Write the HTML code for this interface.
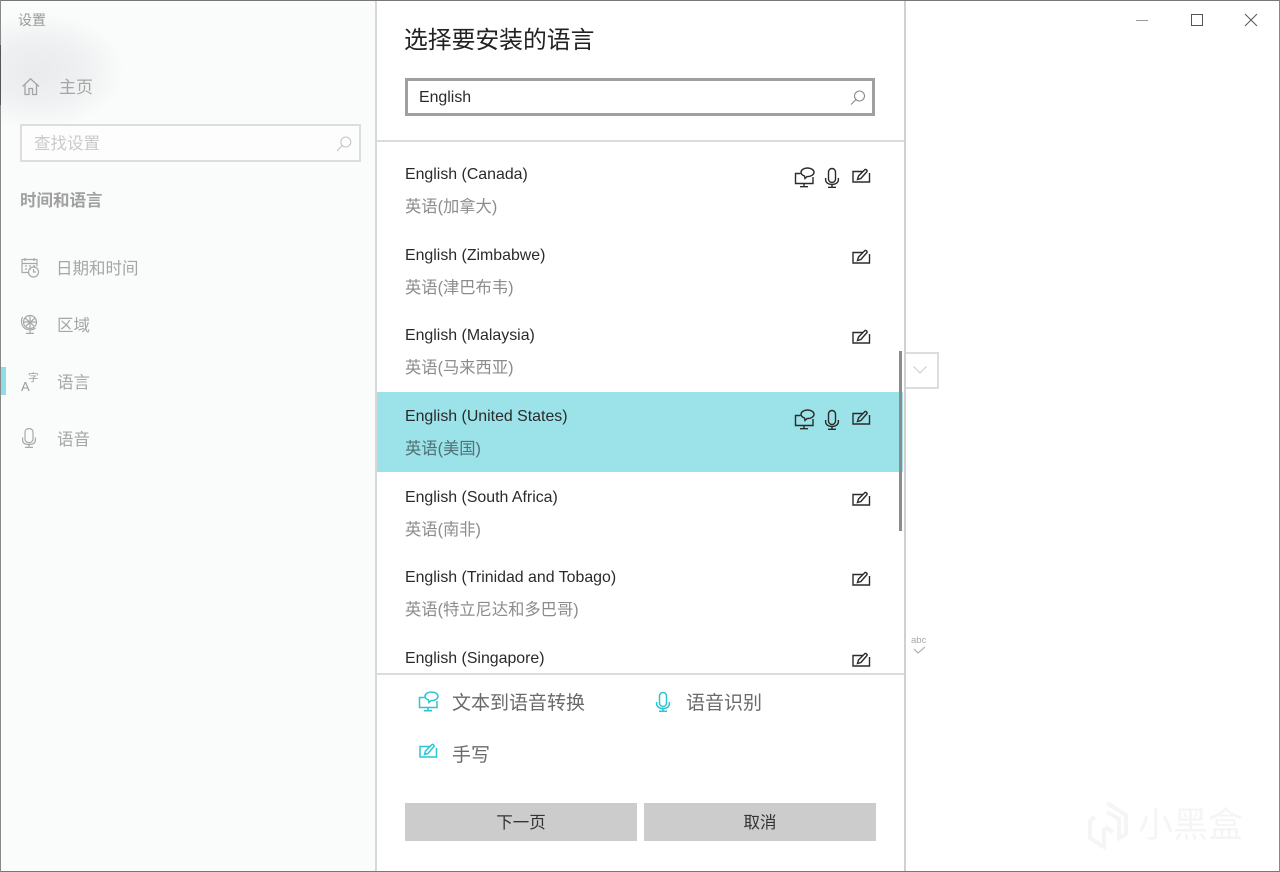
<!DOCTYPE html>
<html lang="zh"><head><meta charset="utf-8">
<style>
html,body{margin:0;padding:0;width:1280px;height:872px;overflow:hidden;background:#fff}
body{position:relative;font-family:"Liberation Sans","Noto Sans CJK SC",sans-serif}
.a{position:absolute;white-space:nowrap;line-height:1}
.side{position:absolute;left:1px;top:1px;width:374px;height:870px;background:radial-gradient(ellipse 85px 58px at 38px 70px,#e9ebec 0%,#eef0f1 50%,rgba(250,251,251,0) 100%),#fafbfb}
.s{color:#a6a6a6;font-size:16.5px}
.en{color:#2a2a2a;font-size:15.9px;left:405px}
.zh{color:#8c8c8c;font-size:16.3px;left:405px}
svg{position:absolute;overflow:visible;fill:none}
.ic{stroke:#2b2b2b;stroke-width:1.4}
.ct{stroke:#2cc5d3;stroke-width:1.5}
.g{stroke:#a8a8a8;stroke-width:1.2}
.btn{position:absolute;top:803px;height:38px;width:232px;background:#ccc;color:#333;font-size:16.5px;line-height:40px;text-align:center}
</style></head><body>
<svg width="0" height="0" style="position:absolute"><defs>
<g id="tts"><path d="M6.500 6.500H1.500V16.500H19V10M10 16.500v3M6 19.700h8"/><path d="M13.500 1c3.600 0 6.500 1.900 6.500 4.300S17.100 9.600 13.500 9.600H13L11 11.500 10.500 9C8.500 8.300 7 7 7 5.300 7 2.900 9.900 1 13.500 1z"/></g>
<g id="mic"><rect x="3.500" y="1.500" width="7" height="14" rx="3.500"/><path d="M.6 11v1.500C.6 15.800 3.500 17.500 7 17.500S13.400 15.800 13.400 12.500V11M7 17.500v2.500M3 20.300h8"/></g>
<g id="pen"><path d="M10.500 4.500H1v10.500h16.500V6"/><path d="M5.500 12.500l1-3.500L13 2.500c.7-.7 2.700 1.200 2 2L8.900 11.500z"/></g>
</defs></svg>

<div class="side"></div>
<div style="position:absolute;left:0;top:0;width:1280px;height:1px;background:#777"></div>
<div style="position:absolute;left:0;top:871px;width:1280px;height:1px;background:#777"></div>
<div style="position:absolute;left:0;top:0;width:1px;height:872px;background:#888"></div>
<div style="position:absolute;left:1279px;top:0;width:1px;height:872px;background:#888"></div>
<div style="position:absolute;left:0;top:45px;width:1px;height:60px;background:#555"></div>

<div class="a" style="left:18px;top:13px;font-size:14px;color:#9a9a9a">设置</div>
<svg style="left:22px;top:78px" width="18" height="18" stroke="#a4a4a4" stroke-width="1.300"><path d="M.6 8.500L8.500.8l8.500 7.700M3 6.500v10h4v-6h3.500v6h4v-10"/></svg>
<div class="a s" style="left:59px;top:79px;font-size:17px">主页</div>
<div style="position:absolute;left:20px;top:124px;width:337px;height:34px;border:2px solid #dcdede;background:#fdfdfd"></div>
<div class="a" style="left:34px;top:136px;font-size:16.500px;color:#cacaca">查找设置</div>
<svg style="left:336px;top:136px" width="16" height="16" stroke="#c4c4c4" stroke-width="1.100"><circle cx="9.800" cy="6" r="5"/><path d="M6.300 9.500L1 15"/></svg>
<div class="a" style="left:20px;top:193px;font-size:16.500px;font-weight:bold;color:#a0a0a0">时间和语言</div>

<svg class="g" style="left:21px;top:258px" width="20" height="20"><path d="M8 14.500H1V1.500h15v7M1 5.500h15M4 0v3M13 0v3M4 8h2M8 8h2M12 8h2M4 11h2M8 11h2"/><circle cx="12.500" cy="14" r="5"/><path d="M12.500 11v3h2.500"/></svg>
<div class="a s" style="left:56px;top:261px">日期和时间</div>
<svg class="g" style="left:20px;top:314px" width="20" height="21"><circle cx="10" cy="8" r="6.500"/><path d="M2.500 3C.5 7 1.500 12 5 14.500c3 2 7.500 2 10.500-.5M10 16.500V19M6 19.400h8M5 4l9 8M15 4l-9 8M10 1.500v13M3.500 8h13"/></svg>
<div class="a s" style="left:57px;top:318px">区域</div>
<div style="position:absolute;left:1px;top:367px;width:5px;height:28px;background:#8fdde4"></div>
<div class="a" style="left:21px;top:380px;font-size:13px;color:#9c9c9c">A</div>
<div class="a" style="left:28px;top:373px;font-size:10.500px;color:#9c9c9c">字</div>
<div class="a s" style="left:57px;top:375px">语言</div>
<svg class="g" style="left:22px;top:428px" width="14" height="20"><rect x="3" y=".6" width="8" height="14" rx="3.500"/><path d="M.6 9.500v2.500c0 3 2.500 4.500 6.400 4.500s6.400-1.500 6.400-4.500V9.500M7 16.500v2.500M3 19.400h8"/></svg>
<div class="a s" style="left:57px;top:432px">语音</div>

<div style="position:absolute;left:375px;top:1px;width:2px;height:870px;background:#d8d8d8"></div>
<div style="position:absolute;left:904px;top:1px;width:2px;height:870px;background:#d0d0d0"></div>
<div style="position:absolute;left:377px;top:1px;width:527px;height:870px;background:#fff"></div>

<div class="a" style="left:404px;top:29px;font-size:23.800px;color:#222">选择要安装的语言</div>
<div style="position:absolute;left:405px;top:78px;width:464px;height:32px;border:3px solid #a0a0a0;background:#fff"></div>
<div class="a" style="left:419px;top:90px;font-size:15.900px;color:#2a2a2a">English</div>
<svg style="left:850px;top:90px" width="16" height="16" stroke="#8a8a8a" stroke-width="1.100"><circle cx="9.500" cy="6" r="5"/><path d="M6 9.500L1 14.500"/></svg>
<div style="position:absolute;left:377px;top:140px;width:527px;height:2px;background:#dcdcdc"></div>

<div style="position:absolute;left:377px;top:391.500px;width:526px;height:80.500px;background:#9be2e9"></div>

<div class="a en" style="top:167px">English (Canada)</div><div class="a zh" style="top:199px">英语(加拿大)</div>
<div class="a en" style="top:248px">English (Zimbabwe)</div><div class="a zh" style="top:280px">英语(津巴布韦)</div>
<div class="a en" style="top:328px">English (Malaysia)</div><div class="a zh" style="top:360px">英语(马来西亚)</div>
<div class="a en" style="top:409px">English (United States)</div><div class="a zh" style="top:441px;color:#4f7075">英语(美国)</div>
<div class="a en" style="top:490px">English (South Africa)</div><div class="a zh" style="top:522px">英语(南非)</div>
<div class="a en" style="top:570px">English (Trinidad and Tobago)</div><div class="a zh" style="top:602px">英语(特立尼达和多巴哥)</div>

<svg class="ic" style="left:794px;top:167px" width="22" height="22"><use href="#tts"/></svg>
<svg class="ic" style="left:825px;top:167px" width="15" height="21"><use href="#mic"/></svg>
<svg class="ic" style="left:851.500px;top:167px" width="19" height="16"><use href="#pen"/></svg>
<svg class="ic" style="left:851.500px;top:248px" width="19" height="16"><use href="#pen"/></svg>
<svg class="ic" style="left:851.500px;top:328px" width="19" height="16"><use href="#pen"/></svg>
<svg class="ic" style="left:794px;top:409px" width="22" height="22"><use href="#tts"/></svg>
<svg class="ic" style="left:825px;top:409px" width="15" height="21"><use href="#mic"/></svg>
<svg class="ic" style="left:851.500px;top:409px" width="19" height="16"><use href="#pen"/></svg>
<svg class="ic" style="left:851.500px;top:490px" width="19" height="16"><use href="#pen"/></svg>
<svg class="ic" style="left:851.500px;top:570px" width="19" height="16"><use href="#pen"/></svg>

<div style="position:absolute;left:899px;top:351px;width:3px;height:180px;background:#8b8b8b"></div>

<div style="position:absolute;left:377px;top:669px;width:527px;height:202px;background:#fff"></div>
<div class="a en" style="top:651px">English (Singapore)</div>
<svg class="ic" style="left:851.500px;top:651px" width="19" height="16"><use href="#pen"/></svg>
<div style="position:absolute;left:377px;top:673px;width:527px;height:2px;background:#dcdcdc"></div>

<svg class="ct" style="left:418px;top:691px" width="22" height="22"><use href="#tts"/></svg>
<div class="a" style="left:452px;top:694px;font-size:19px;color:#6a6a6a">文本到语音转换</div>
<svg class="ct" style="left:655.500px;top:691px" width="15" height="21"><use href="#mic"/></svg>
<div class="a" style="left:686px;top:694px;font-size:19px;color:#6a6a6a">语音识别</div>
<svg class="ct" style="left:418.500px;top:742px" width="19" height="16"><use href="#pen"/></svg>
<div class="a" style="left:452px;top:746px;font-size:19px;color:#6a6a6a">手写</div>

<div class="btn" style="left:405px">下一页</div>
<div class="btn" style="left:644px">取消</div>

<div style="position:absolute;left:906px;top:352px;width:31px;height:33px;border:2px solid #ddd;border-left:0"></div>
<svg style="left:913px;top:366px" width="14" height="8" stroke="#d4d4d4" stroke-width="1.300"><path d="M.5.500l6.500 6.500 6.500-6.500"/></svg>
<div class="a" style="left:911px;top:636px;font-size:9.500px;color:#a8a8a8">abc</div>
<svg style="left:913px;top:646px" width="13" height="9" stroke="#a8a8a8" stroke-width="1.100"><path d="M1 3l4 4 7-6"/></svg>

<div style="position:absolute;left:1136px;top:20px;width:12px;height:1px;background:#999"></div>
<div style="position:absolute;left:1191px;top:14px;width:10px;height:10px;border:1px solid #555"></div>
<svg style="left:1245px;top:14px" width="12" height="12" stroke="#555" stroke-width="1"><path d="M0 0l12 12M12 0L0 12"/></svg>

<svg style="left:1087px;top:800px" width="46" height="52" stroke="#f5f5f5" stroke-width="4"><path d="M20 3l19 12v19l-7 4V19l-12-7M3 20v18l14 9V28M8 17l-5 3M18 27l8 5"/></svg>
<div class="a" style="left:1138px;top:808px;font-size:35px;color:#f5f5f5">小黑盒</div>
</body></html>
